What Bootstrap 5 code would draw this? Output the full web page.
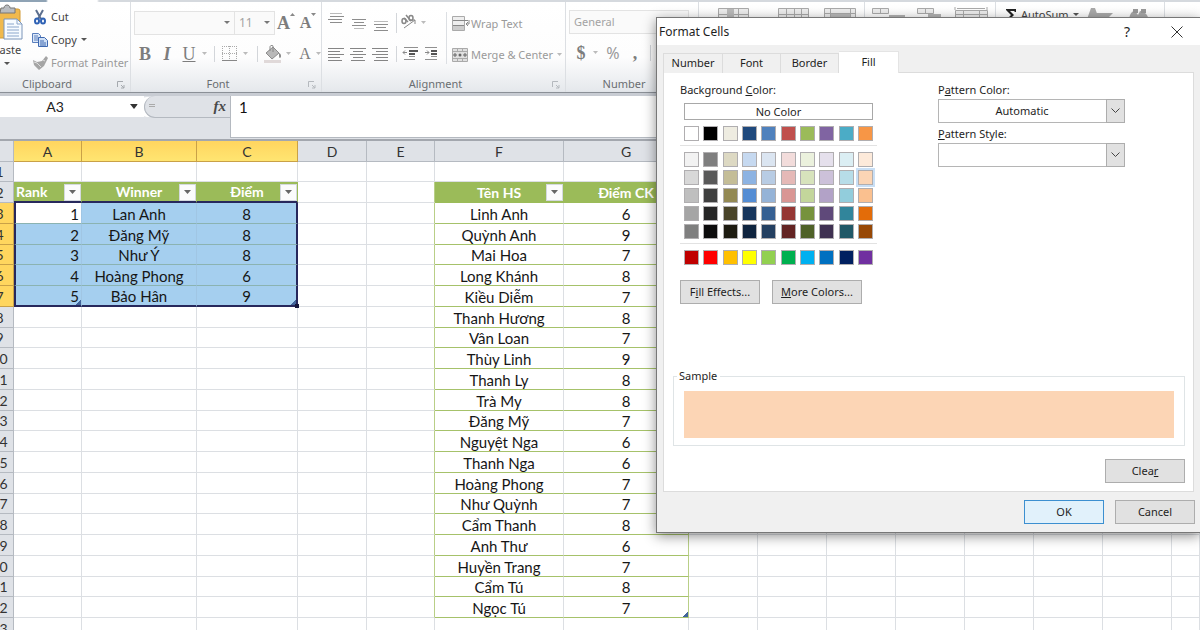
<!DOCTYPE html>
<html lang="vi">
<head>
<meta charset="utf-8">
<meta name="viewport" content="width=device-width, initial-scale=1">
<title>Format Cells</title>
<link href="https://cdn.jsdelivr.net/npm/bootstrap@5.3.0/dist/css/bootstrap.min.css" rel="stylesheet">
<style>
  body { font-family: "Noto Sans", "Open Sans", sans-serif; font-size: 12px; line-height: 16px; color: #1e1e1e; background: #fff; }
  button, input, select { font-family: inherit; font-size: inherit; color: inherit; }
  svg { display: block; flex: none; }

  /* ribbon */
  .ribbon-edge { height: 2px; background: linear-gradient(90deg, #8fa3b5 0 46px, #fff 48px 97px, #d5d9de 99px); }
  .ribbon { height: 91px; background: linear-gradient(#fff 0, #fdfdfd 55px, #e6e9ed 88px, #dfe3e8); border-bottom: 1px solid #8b9097; color: #9a9a9a; font-size: 11px; }
  .rgroup { border-right: 1px solid #dcdfe3; flex: none; overflow: hidden; }
  .g-clip { width: 131px; } .g-font { width: 191px; } .g-align { width: 244px; } .g-num { width: 133px; }
  .g-style { width: 166px; } .g-cells { width: 131px; } .g-edit { width: 169px; }
  .glabel { height: 16px; color: #6a6d71; }
  .glabel svg { right: 5px; top: 5px; }
  .gbody { height: 74px; }
  .tool { border: 0; background: none; padding: 0; display: flex; align-items: center; justify-content: center; height: 22px; line-height: 16px; white-space: nowrap; flex: none; }
  .tool.dark { color: #444; }
  .serif { font-family: "Liberation Serif", serif; font-weight: 700; color: #7d7d7d; font-size: 18px; }
  .paste { width: 30px; margin-left: -8px; color: #444; flex-direction: column; justify-content: flex-start; height: 72px; }
  .clip-list { margin-left: 9px; padding-top: 3px; }
  .clip-list .tool { height: 23px; justify-content: flex-start; }
  .clip-list svg { margin-right: 2px; }
  .vsep { width: 1px; height: 16px; background: #d3d6da; flex: none; }
  .combo { height: 24px; border: 1px solid #e3e3e3; background: #fafafa; color: #a3a3a3; }
  .combo input { border: 0; background: none; padding: 0; min-width: 0; outline: 0; }
  .w10 { width: 10px; } .w12 { width: 12px; } .w14 { width: 14px; } .w18 { width: 18px; } .w22 { width: 22px; }
  .row-a { height: 42px; padding-left: 3px; } .row-b { height: 20px; padding-left: 3px; }
  .font-name { width: 101px; } .font-size { width: 41px; margin-left: -1px; font-size: 12px; }
  .align-sep { width: 1px; height: 52px; background: #dcdfe3; margin: 10px 5px 0 9px; }
  .wrap-tools { display: grid; gap: 9px; align-content: start; justify-items: start; padding-top: 11px; }
  .num-box { margin-left: 3px; width: 120px; }
  .num-tools { padding: 8px 0 0 4px; }

  /* formula bar */
  .fbar { height: 48px; background: #dfe2e7; border-top: 3px solid #c8ccd3; border-bottom: 2px solid #a3a7ae; }
  .namebox { width: 144px; height: 21px; background: #fff; font-family: Lato, sans-serif; font-size: 14px; color: #222; }
  .namebox input { width: 110px; border: 0; padding: 0; text-align: center; background: none; outline: 0; }
  .fx-zone { width: 86px; height: 22px; border: 1px solid #b4b9c0; border-width: 0 0 1px 1px; border-radius: 11px 0 0 11px; box-shadow: -8px 0 0 -1px #fff; color: #888; }
  .fx { font: italic 700 15px/20px "Liberation Serif", serif; color: #4a4a4a; }
  .formula { border: 0; border-left: 1px solid #b4b9c0; border-bottom: 1px solid #b4b9c0; height: 42px; padding: 0 8px 20px; font-family: Lato, sans-serif; font-size: 15px; color: #111; background: #fff; outline: 0; min-width: 0; }

  /* worksheet */
  .sheet { margin-left: -14px; table-layout: fixed; border-collapse: separate; border-spacing: 0; width: calc(100% + 14px); font-family: Lato, "Noto Sans", sans-serif; font-size: 15px; line-height: 18px; color: #161616; }
  .sheet th, .sheet td { padding: 1px 0 0; border: 0 solid #dcdfe3; border-width: 0 1px 1px 0; text-align: center; vertical-align: middle; font-weight: 400; white-space: nowrap; position: relative; }
  .sheet th { background: #dfe2e7; color: #333; border-color: #b5bac1; font-size: 14px; }
  .sheet tr { height: 21px; }
  .sheet tbody tr:nth-child(4n+1) { height: 20px; }
  .sheet thead th.on { background: linear-gradient(#ffd55f, #ffe571); border-color: #c9a147; }
  .sheet tbody th.on { background: #ffd65e; border-color: #c9a147; }
  .sheet td.head { background: #9bbb59; border-color: #9bbb59; color: #fff; font-weight: 700; font-size: 14px; }
  .sheet td.sel { background: #a5cfef; border-bottom-color: #8bb3b1; border-right-color: #a0c6e4; }
  .sheet td.now { background: #fff; }
  .sheet td.num { text-align: right; padding-right: 2px; }
  .sheet td.head.num { text-align: left; padding-left: 2px; }
  .sheet td.s-top { border-bottom: 2px solid #27285c; padding-top: 0; }
  .sheet td.s-left { border-left: 2px solid #27285c; }
  .sheet td.s-right { border-right: 2px solid #27285c; }
  .sheet td.s-bot { border-bottom: 2px solid #27285c; padding-top: 0; }
  .sheet td.lst { border-bottom-color: #a6c26a; }
  .sheet td.edge { border-right-color: #b9cf87; }
  .filter-btn { position: absolute; right: 0; top: 2px; width: 17px; height: 17px; padding: 0; border: 1px solid #d4d9de; background: #fbfbfc; display: flex; align-items: center; justify-content: center; }
  .corner { position: absolute; right: 0; bottom: 0; width: 5px; height: 5px; background: linear-gradient(135deg, transparent 45%, #41649a 50%); }
  .handle { position: absolute; right: -3px; bottom: -3px; width: 4px; height: 4px; background: #15163a; z-index: 1; }

  /* dialog */
  .dialog { position: absolute; top: 17px; right: 0; width: 544px; background: #f0f0f0; border: 1px solid #777; border-right: 0; box-shadow: 0 3px 12px rgba(0,0,0,.45); font-size: 11px; z-index: 5; }
  .titlebar { height: 27px; background: #fff; font-size: 12px; padding-left: 2px; }
  .titlebar button { border: 0; background: none; padding: 0; width: 46px; display: flex; justify-content: center; font-size: 14px; }
  .titlebar .help { width: 54px; }
  .tabs { padding: 6px 0 0 6px; height: 28px; }
  .tabs button { width: 58px; height: 20px; border: 1px solid #dcdcdc; border-width: 1px 1px 0 0; background: #f0f0f0; padding: 0 0 2px; }
  .tabs button:first-child { border-left-width: 1px; width: 60px; }
  .tabs button.active { width: 60px; height: 22px; background: #fff; border-color: #e4e4e4; }
  .panel { margin: -1px 6px 0 6px; background: #fff; border: 1px solid #dcdcdc; height: 420px; padding: 9px 8px 8px 9px; }
  .left-col { width: 197px; margin-left: 7px; margin-right: 61px; }
  .right-col { width: 187px; }
  .nocolor { margin: 5px 4px 0; height: 17px; border: 1px solid #a8a8a8; background: #fff; padding: 0; line-height: 14px; }
  .palette { margin-top: 6px; }
  .swrow { padding: 0 4px; }
  .shades { display: grid; gap: 3px; }
  .sw { width: 15px; height: 15px; border: 1px solid #b0aeb0; padding: 0; }
  .sw.picked { outline: 2px solid #c9dff5; }
  .rule { height: 1px; background: #e2e2e2; margin: 4px 0 6px; }
  .fill-btns { margin-top: 15px; }
  .btn-win { height: 24px; border: 1px solid #adadad; background: #e1e1e1; padding: 0; width: 80px; line-height: 20px; }
  .btn-win.wide { width: 90px; }
  .btn-win.ok { border-color: #3c8fd0; background: #e1f1fb; }
  .dlg-foot { padding: 8px 5px 8px 0; gap: 11px; }
  .pick { margin: 1px 0 3px; }
  .pick select { display: block; appearance: none; width: 100%; height: 24px; border: 1px solid #b5b5b5; border-radius: 0; background: #fff; text-align: center; padding: 0 19px 0 0; color: #1e1e1e; opacity: 1; }
  .pick .arrow { right: 0; top: 0; width: 19px; height: 24px; border: 1px solid #adadad; background: #e1e1e1; pointer-events: none; }
  .right-col label { display: block; }
  .sample { border: 1px solid #dfe4e6; height: 78px; padding: 0 10px; margin-top: 64px; }
  .sample legend { float: none; width: auto; font-size: 11px; line-height: 16px; margin: 0 0 0 -7px; padding: 0 3px 0 2px; }
  .sample-fill { height: 47px; margin-top: 7px; background: #fcd5b5; }
</style>
</head>
<body class="vh-100 overflow-hidden position-relative">

<div class="ribbon-edge"></div>
<header class="ribbon d-flex overflow-hidden">
  <section class="rgroup g-clip d-flex flex-column">
    <div class="gbody d-flex">
      <button class="tool paste">
        <svg width="32" height="40" viewBox="0 0 32 40"><rect x="2" y="7" width="27" height="29" rx="2" fill="#f0b94d" stroke="#d19a35"/><path d="M10 6h3c0-4 6-4 6 0h5v5H9z" fill="#b9bcc0" stroke="#777"/><path d="M13 17h13l5 5v15H13z" fill="#f7fbff" stroke="#7b94b8"/><path d="M26 17v5h5M16 22h7M16 25h12M16 28h12M16 31h12M16 34h12" fill="none" stroke="#8ba6cb"/></svg>
        <span>Paste</span>
        <svg class="mt-1" width="6" height="4"><path d="M0 0h6L3 3z" fill="#555"/></svg>
      </button>
      <div class="clip-list d-flex flex-column">
        <button class="tool dark"><svg width="18" height="16" viewBox="0 0 18 16"><path d="M5 1l5 9M12 1L7 10" stroke="#5c6f8f" stroke-width="2"/><ellipse cx="6" cy="12" rx="2" ry="2.500" fill="none" stroke="#2f62b5" stroke-width="2"/><ellipse cx="12" cy="12" rx="2" ry="2.500" fill="none" stroke="#2f62b5" stroke-width="2"/></svg>Cut</button>
        <button class="tool dark"><svg width="18" height="16" viewBox="0 0 18 16"><path d="M1.500 1.500h6l2 2v7h-8z" fill="#dce8f8" stroke="#5a7fbd"/><path d="M3 4h4M3 6h5M3 8h5" stroke="#5a7fbd"/><path d="M7.500 5.500h6l3 3v6h-9z" fill="#cfe0f6" stroke="#3e68b0"/><path d="M9 9h4M9 11h6M9 13h6" stroke="#3e68b0"/></svg>Copy<svg class="ms-1" width="6" height="4"><path d="M0 0h6L3 3z" fill="#555"/></svg></button>
        <button class="tool"><svg width="18" height="16" viewBox="0 0 18 16"><path d="M2 5l4 2 5-1 4-5 2 2-4 8-5 4-5-5z" fill="#a5a5a5"/><path d="M3 7l3 1 4 4M12 5l2 1" fill="none" stroke="#ddd"/></svg>Format Painter</button>
      </div>
    </div>
    <div class="glabel position-relative text-center pe-5 ps-2"><span class="ms-1">Clipboard</span><svg class="position-absolute" width="8" height="8"><path d="M.5 6V.5H6M4 4l3 3M7 4v3H4" fill="none" stroke="#a5a9ae"/></svg></div>
  </section>

  <section class="rgroup g-font d-flex flex-column">
    <div class="gbody">
      <div class="row-a d-flex align-items-center">
        <div class="combo font-name d-flex align-items-center pe-1"><input class="flex-grow-1" aria-label="Font"><svg width="6" height="4"><path d="M0 0h6L3 3z" fill="#777"/></svg></div>
        <div class="combo font-size d-flex align-items-center ps-1"><input class="flex-grow-1 w-50" aria-label="Font size" value="11"><svg class="me-1" width="6" height="4"><path d="M0 0h6L3 3z" fill="#777"/></svg></div>
        <button class="tool serif w22" aria-label="Grow font">A<svg class="mb-3" width="5" height="4"><path d="M0 3h5L2.500 0z" fill="#888"/></svg></button>
        <button class="tool serif w22 fs-6" aria-label="Shrink font">A<svg class="mb-3" width="5" height="4"><path d="M0 0h5L2.500 3z" fill="#888"/></svg></button>
      </div>
      <div class="row-b d-flex align-items-center">
        <button class="tool serif w22">B</button>
        <button class="tool serif w22 fst-italic">I</button>
        <button class="tool serif w22 text-decoration-underline fw-normal">U</button>
        <svg class="w10" width="10" height="4"><path d="M2 0h5L4.500 3z" fill="#bbb"/></svg>
        <span class="vsep mx-1"></span>
        <svg class="w22" width="22" height="16" viewBox="0 0 22 16"><path d="M3.500 0v15M10.500 0v15M17.500 0v15M3 .5h15M3 7.500h15" stroke="#aaa" stroke-dasharray="1 1"/><path d="M3 14.500h15" stroke="#888"/></svg>
        <svg class="w12" width="12" height="4"><path d="M2 0h5L4.500 3z" fill="#bbb"/></svg>
        <span class="vsep ms-1"></span>
        <svg class="w22 ms-1" width="22" height="18" viewBox="0 0 22 18"><path d="M4 8l7-6 6 6-7 6z" fill="#b9b9b9" stroke="#8c8c8c"/><path d="M11 7V1c0-1-3-1-3 1v4" fill="none" stroke="#888"/><path d="M17 8c3 1 2 5 1 5s-1-2-1-5z" fill="#888"/><path d="M2 15h17v3H2z" fill="#e0d9d9"/></svg>
        <svg class="w12" width="12" height="4"><path d="M2 0h5L4.500 3z" fill="#bbb"/></svg>
        <button class="tool serif w18 fs-6 fw-normal" aria-label="Font color">A</button>
        <svg class="w10" width="10" height="4"><path d="M2 0h5L4.500 3z" fill="#bbb"/></svg>
      </div>
    </div>
    <div class="glabel position-relative text-center pe-3">Font<svg class="position-absolute" width="8" height="8"><path d="M.5 6V.5H6M4 4l3 3M7 4v3H4" fill="none" stroke="#b5b9be"/></svg></div>
  </section>

  <section class="rgroup g-align d-flex flex-column">
    <div class="gbody d-flex">
      <div>
        <div class="row-a d-flex align-items-center">
          <svg width="74" height="20" viewBox="0 0 74 20"><path d="M5 3.500h14M3 6.500h14M5 9.500h12M27 6.500h14M29 9.500h10M27 12.500h14M49 11.500h14M51 14.500h10M49 17.500h14" stroke="#8d8d8d"/><path d="M5 .5h12M29 15.500h10M49 8.500h14" stroke="#bbb"/><path d="M71.500 0v20" stroke="#d3d6da"/></svg>
          <svg width="30" height="18" viewBox="0 0 30 18"><g fill="none" stroke="#888" stroke-width="1.500"><ellipse cx="5" cy="7" rx="2" ry="2.500"/><path d="M5 4l4 4M7 1l5 6"/><ellipse cx="12" cy="4" rx="2" ry="2.500"/><path d="M5 14L16 6M12 6h4v4" stroke-width="1"/></g><path d="M22 7h5l-2.500 3z" fill="#bbb"/></svg>
        </div>
        <div class="row-b d-flex align-items-center">
          <svg width="112" height="16" viewBox="0 0 112 16"><path d="M3 2.500h16M3 5.500h12M3 8.500h16M3 11.500h12M3 14.500h14M25 2.500h16M28 5.500h10M25 8.500h16M28 11.500h10M26 14.500h14M47 2.500h16M51 5.500h12M47 8.500h16M51 11.500h12M49 14.500h14" stroke="#858585"/><path d="M71.500 0v16" stroke="#d3d6da"/><path d="M79 1.500h14M84 10.500h6M79 13.500h11M100 1.500h15M106 10.500h6M100 13.500h12" stroke="#909090"/><path d="M84 4h9v2h-9zM84 7h6v2h-6zM106 4h6v2h-6zM106 7h6v2h-6z" fill="#555"/><path d="M82 6.500h-4l2-2M78 6.500l2 2M100 6.500h4l-2-2M104 6.500l-2 2" fill="none" stroke="#888"/></svg>
        </div>
      </div>
      <div class="align-sep"></div>
      <div class="wrap-tools">
        <button class="tool"><svg width="19" height="18" viewBox="0 0 19 18"><path d="M.5 1.500h12v14H.5z" fill="#eee" stroke="#aaa"/><path d="M1 5.500h15M1 10.500h11" stroke="#888"/><path d="M1 11h11v4H1z" fill="#ccc"/><path d="M17 5v4h-3M16 7l-2 2 2 2" fill="none" stroke="#888"/></svg>Wrap Text</button>
        <button class="tool"><svg width="19" height="18" viewBox="0 0 19 18"><path d="M.5 2.500h15v13H.5z" fill="#e0e0e0" stroke="#aaa"/><path d="M5.500 2v3M10.500 2v3M5.500 13v3M10.500 13v3M0 5.500h16M0 12.500h16" stroke="#aaa"/><path d="M1 9h4M3 7v4M15 9h-4M13 7v4" stroke="#666"/><circle cx="8" cy="9" r="1.500" fill="#666"/></svg>Merge &amp; Center<svg class="ms-1" width="5" height="4"><path d="M0 0h5L2.500 3z" fill="#bbb"/></svg></button>
      </div>
    </div>
    <div class="glabel position-relative text-center pe-3">Alignment<svg class="position-absolute" width="8" height="8"><path d="M.5 6V.5H6M4 4l3 3M7 4v3H4" fill="none" stroke="#b5b9be"/></svg></div>
  </section>

  <section class="rgroup g-num d-flex flex-column">
    <div class="gbody">
      <div class="d-flex align-items-center pt-2"><div class="combo num-box ps-1 d-flex"><input aria-label="Number format" value="General"></div></div>
      <div class="num-tools d-flex align-items-center">
        <button class="tool serif w22">$</button><svg class="w10" width="10" height="4"><path d="M1 0h5L3.500 3z" fill="#bbb"/></svg>
        <button class="tool w22 fs-6">%</button><button class="tool serif w22">,</button><span class="vsep ms-1"></span>
      </div>
    </div>
    <div class="glabel text-center pe-3">Number</div>
  </section>

  <section class="rgroup g-style"><svg width="165" height="20" viewBox="0 0 165 20"><g fill="#eee" stroke="#aaa"><path d="M19.500 6.500h30v12h-30zM79.500 6.500h30v12h-30zM125.500 6.500h31v12h-31z"/><path d="M19 12.500h30M29.500 6v12M39.500 6v12M79 12.500h30M87.500 6v12M95.500 6v12M102.500 6v12M125 11.500h31M131.500 6v12M151.500 6v12"/></g><path d="M28 7h7v12h-7zM132 12h19v6h-19z" fill="#bbb"/></svg></section>
  <section class="rgroup g-cells"><svg width="130" height="20" viewBox="0 0 130 20"><g fill="#eee" stroke="#aaa"><path d="M7.500 6.500h16v5h-16zM52.500 6.500h16v5h-16zM90.500 8.500h32v10h-32z"/><path d="M15.500 6v5M60.500 6v5M98.500 8v10M114.500 8v10M90 12.500h32M90 5v3M122 5v3M92 6.500h28"/></g><path d="M24 13h16v5H24zM63 12h13v5H63z" fill="#b5b5b5"/></svg></section>
  <section class="rgroup g-edit">
    <div class="d-flex">
      <button class="tool dark ps-2 pt-1"><svg width="17" height="16" viewBox="0 0 17 16"><path d="M2 2h10v3h-1l-1-1H6l4 4-4 4h5l1-2v4H2v-1l5-5-5-5z" fill="#222"/></svg>AutoSum<svg class="ms-1" width="6" height="4"><path d="M0 0h6L3 3z" fill="#555"/></svg></button>
      <svg width="80" height="20" viewBox="0 0 80 20"><path d="M7 20L12 6h4l5 14zM16 11h18l-8 8h-5z" fill="#aaa"/><path d="M50 20c0-8 3-11 6-11l3 4 2-4c5 0 9 5 9 11z" fill="#aaa"/><path d="M54 7h5v4h-5zM62 7h5v4h-5z" fill="#999"/></svg>
    </div>
  </section>
</header>

<div class="fbar d-flex">
  <div class="namebox d-flex align-items-center"><input aria-label="Name box" value="A3"><svg class="ms-auto me-1" width="10" height="6"><path d="M0 0h8L4 5z" fill="#333"/></svg></div>
  <div class="fx-zone d-flex justify-content-between px-1"><svg class="mt-2" width="8" height="4"><path d="M0 .5h6M0 2.500h6" stroke="#aaa"/></svg><span class="fx">fx</span></div>
  <input class="formula flex-grow-1" aria-label="Formula" value="1">
</div>

<main class="overflow-hidden">
  <table class="sheet" id="sheet">
    <colgroup id="cols"></colgroup>
    <thead><tr id="letters"></tr></thead>
    <tbody id="rows"></tbody>
  </table>
</main>

<div class="dialog" role="dialog" aria-labelledby="dlg-title">
  <div class="titlebar d-flex align-items-center">
    <span id="dlg-title" class="me-auto">Format Cells</span>
    <button class="help" aria-label="Help">?</button>
    <button aria-label="Close"><svg width="12" height="12"><path d="M.5.5l11 11M11.500.5l-11 11" stroke="#333"/></svg></button>
  </div>
  <div class="tabs d-flex align-items-end" role="tablist">
    <button role="tab">Number</button><button role="tab">Font</button><button role="tab">Border</button><button role="tab" class="active" aria-selected="true">Fill</button>
  </div>
  <div class="panel d-flex flex-column">
    <div class="d-flex align-items-start">
      <div class="left-col d-flex flex-column">
        <span>Background <u>C</u>olor:</span>
        <button class="nocolor">No Color</button>
        <div class="palette" id="palette"></div>
        <div class="fill-btns d-flex gap-2"><button class="btn-win me-1">F<u>i</u>ll Effects...</button><button class="btn-win wide flex-shrink-0"><u>M</u>ore Colors...</button></div>
      </div>
      <div class="right-col">
        <label for="pcolor">P<u>a</u>ttern Color:</label>
        <div class="pick position-relative"><select id="pcolor"><option>Automatic</option></select><span class="arrow position-absolute d-flex align-items-center justify-content-center"><svg width="9" height="6"><path d="M.5.5l4 4 4-4" fill="none" stroke="#444"/></svg></span></div>
        <label for="pstyle"><u>P</u>attern Style:</label>
        <div class="pick position-relative"><select id="pstyle"><option></option></select><span class="arrow position-absolute d-flex align-items-center justify-content-center"><svg width="9" height="6"><path d="M.5.5l4 4 4-4" fill="none" stroke="#444"/></svg></span></div>
      </div>
    </div>
    <fieldset class="sample"><legend>Sample</legend><div class="sample-fill"></div></fieldset>
    <button class="btn-win align-self-end mt-auto">Clea<u>r</u></button>
  </div>
  <div class="dlg-foot d-flex justify-content-end"><button class="btn-win ok">OK</button><button class="btn-win">Cancel</button></div>
</div>

<script>
  const widths = [28, 68, 115, 101, 69, 68, 129, 125, 69, 69, 69, 69, 69, 69, 69];
  const winners = ['Lan Anh 8', 'Đăng Mỹ 8', 'Như Ý 8', 'Hoàng Phong 6', 'Bảo Hân 9'];
  const pupils = ['Linh Anh 6', 'Quỳnh Anh 9', 'Mai Hoa 7', 'Long Khánh 8', 'Kiều Diễm 7', 'Thanh Hương 8', 'Vân Loan 7', 'Thùy Linh 9', 'Thanh Ly 8', 'Trà My 8', 'Đăng Mỹ 7', 'Nguyệt Nga 6', 'Thanh Nga 6', 'Hoàng Phong 7', 'Như Quỳnh 7', 'Cẩm Thanh 8', 'Anh Thư 6', 'Huyền Trang 7', 'Cẩm Tú 8', 'Ngọc Tú 7'];
  const split = s => [s.slice(0, -2), s.slice(-1)];
  const drop = '<button class="filter-btn" aria-label="Filter"><svg width="7" height="5"><path d="M0 0h7L3.500 4z" fill="#666"/></svg></button>';

  document.getElementById('cols').innerHTML = widths.map(w => `<col style="width:${w}px">`).join('') + '<col>';
  document.getElementById('letters').innerHTML = '<th></th>' + [...'ABCDEFGHIJKLMN'].map((l, i) => `<th class="${i < 3 ? 'on' : ''}">${l}</th>`).join('') + '<th></th>';

  let html = '';
  for (let r = 1; r <= 23; r++) {
    html += `<tr><th class="${r >= 3 && r <= 7 ? 'on' : ''}">${r}</th>`;
    for (let c = 1; c <= widths.length; c++) {
      let cls = [], text = '';
      if (r === 2 && c <= 3) { cls.push('head', 's-top'); text = ['Rank', 'Winner', 'Điểm'][c - 1] + drop; if (c === 1) cls.push('num'); }
      if (r === 2 && (c === 6 || c === 7)) { cls.push('head'); text = c === 6 ? 'Tên HS' + drop : 'Điểm CK'; }
      if (r >= 3 && r <= 7 && c <= 3) {
        cls.push('sel');
        text = c === 1 ? r - 2 : split(winners[r - 3])[c - 2];
        if (c === 1) cls.push('num', 's-left');
        if (c === 1 && r === 3) cls.push('now');
        if (c === 3) cls.push('s-right');
        if (r === 7) cls.push('s-bot');
        if (r === 7 && c !== 2) text += '<span class="corner"></span>';
        if (r === 7 && c === 3) text += '<span class="handle"></span>';
      }
      if (r >= 3 && r <= 22 && (c === 6 || c === 7)) {
        cls.push('lst'); text = split(pupils[r - 3])[c - 6];
        if (c === 7) cls.push('edge');
        if (r === 22 && c === 7) text += '<span class="corner"></span>';
      }
      if (r >= 2 && r <= 22 && c === 5) cls.push('edge');
      html += `<td class="${cls.join(' ')}">${text}</td>`;
    }
    html += '</tr>';
  }
  document.getElementById('rows').innerHTML = html;

  const theme = [
    'fff 000 eeece1 1f497d 4f81bd c0504d 9bbb59 8064a2 4bacc6 f79646',
    'f2f2f2 7f7f7f ddd9c3 c6d9f0 dbe5f1 f2dcdb ebf1dd e5e0ec dbeef3 fdeada',
    'd8d8d8 595959 c4bd97 8db3e2 b8cce4 e5b9b7 d7e3bc ccc1d9 b7dde8 fbd5b5',
    'bfbfbf 3f3f3f 938953 548dd4 95b3d7 d99694 c3d69b b2a2c7 92cddc fac08f',
    'a5a5a5 262626 494429 17365d 366092 953734 76923c 5f497a 31859b e36c09',
    '7f7f7f 0c0c0c 1d1b10 0f243e 244061 632423 4f6128 3f3151 205867 974806',
    'c00000 ff0000 ffc000 ffff00 92d050 00b050 00b0f0 0070c0 002060 7030a0'];
  const strip = (s, i) => '<div class="swrow d-flex justify-content-between">' + s.split(' ').map((h, j) =>
    `<button class="sw${i === 2 && j === 9 ? ' picked' : ''}" style="background:#${h}" aria-label="#${h}"></button>`).join('') + '</div>';
  document.getElementById('palette').innerHTML =
    strip(theme[0], 0) + '<div class="rule"></div><div class="shades">' +
    theme.slice(1, 6).map((s, i) => strip(s, i + 1)).join('') + '</div><div class="rule"></div>' + strip(theme[6], 6);
</script>
<script src="https://cdn.jsdelivr.net/npm/bootstrap@5.3.0/dist/js/bootstrap.bundle.min.js"></script>
</body>
</html>
